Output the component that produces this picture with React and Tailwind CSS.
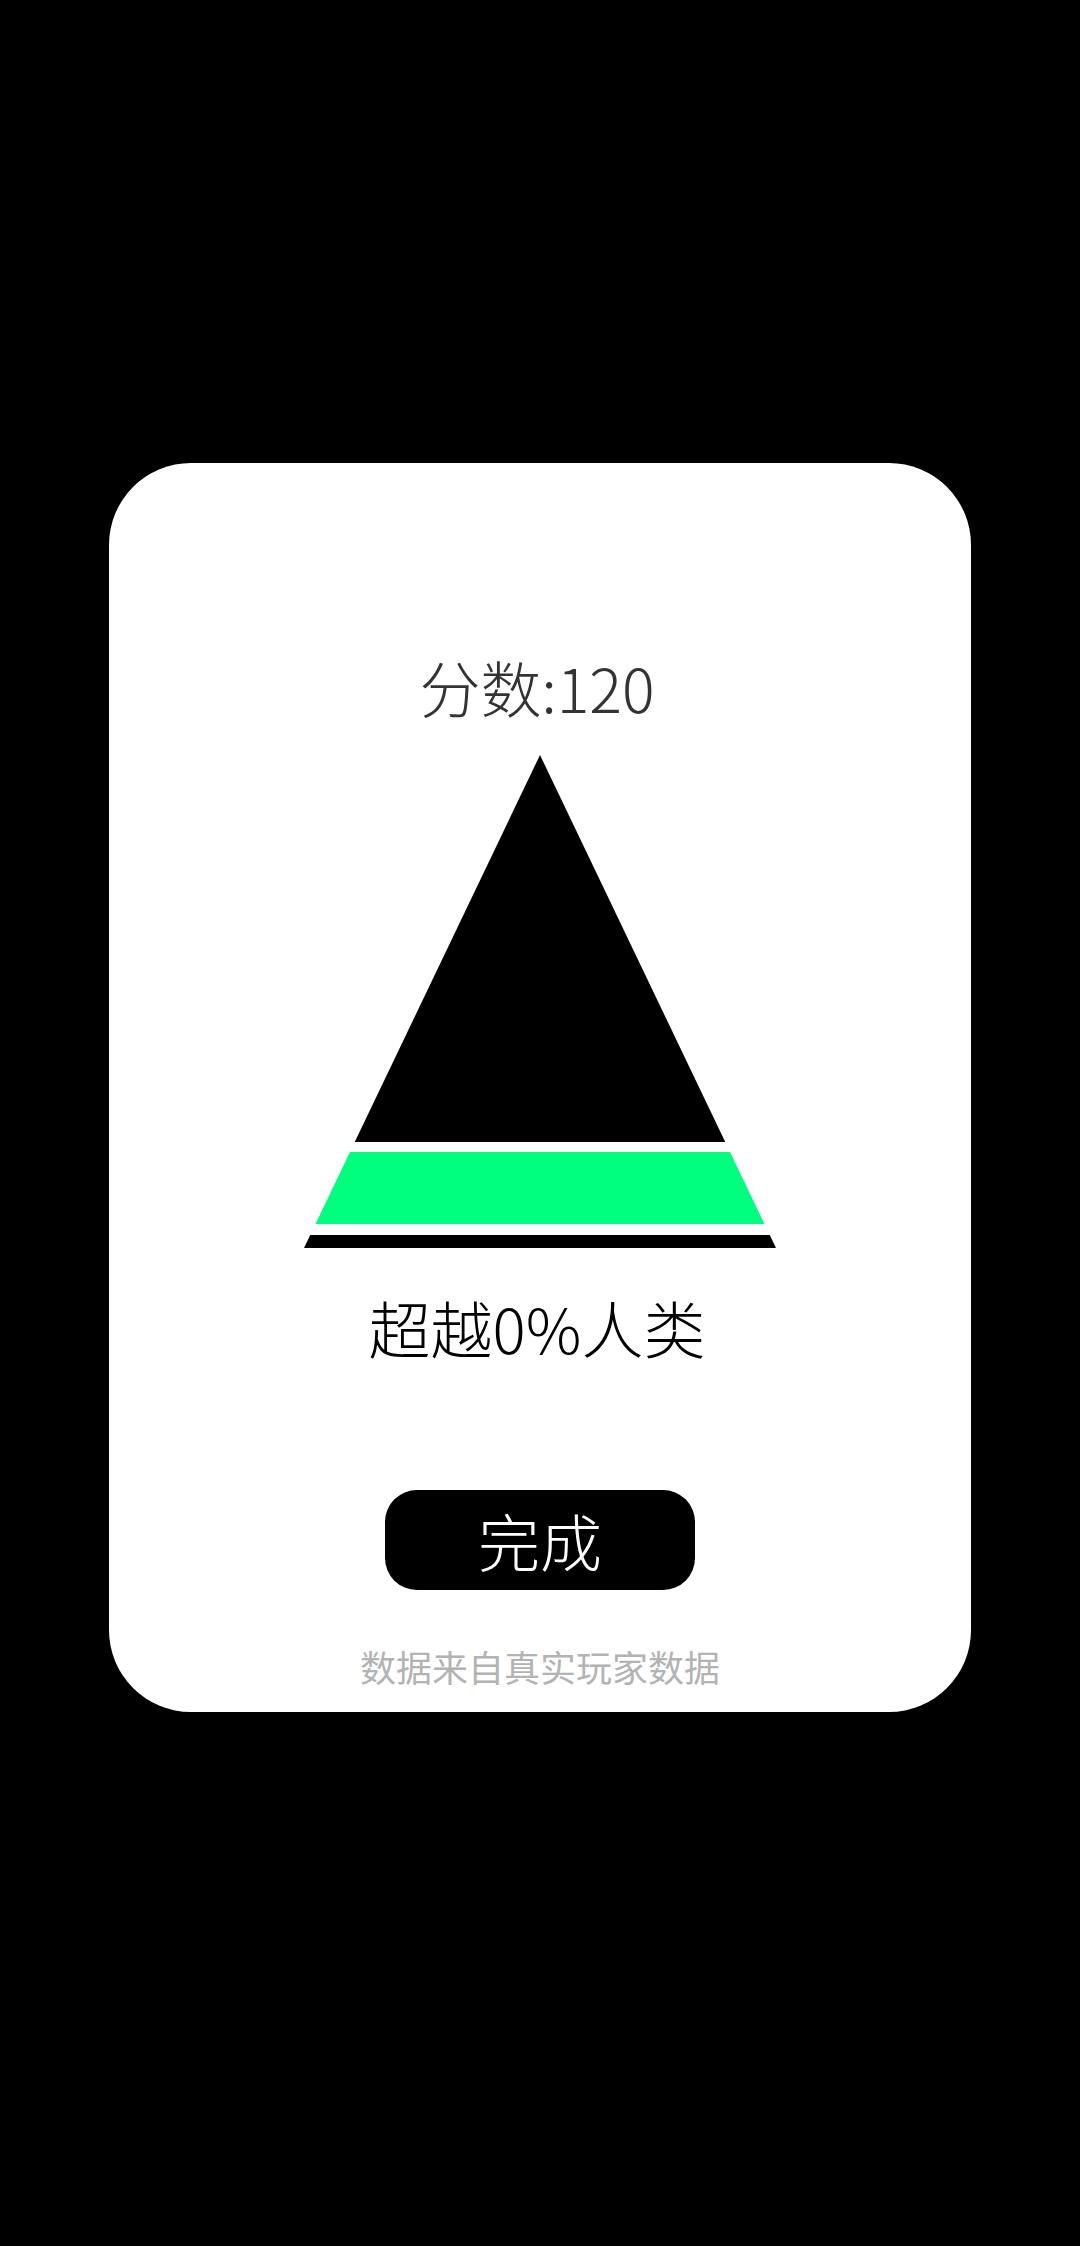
export default function App() {
  const k = 236 / 493;
  const x = (y) => 236 - k * y;
  const r = (y) => 236 + k * y;
  return (
    <div
      className="w-full h-[2246px] bg-black flex flex-col items-center pt-[463px]"
      style={{ fontFamily: '"Noto Sans CJK SC", "Noto Sans", sans-serif' }}
    >
      <div className="w-[862px] h-[1249px] bg-white rounded-[82px] flex flex-col items-center">
        <div className="mt-[184px] h-[80px] leading-[80px] text-[61px] font-light text-[#333333] pr-[6px]">
          分数:120
        </div>
        <svg className="mt-[28px]" width="472" height="493" viewBox="0 0 472 493">
          <polygon points={`236,0 ${x(387)},387 ${r(387)},387`} fill="#000000" />
          <polygon
            points={`${x(397)},397 ${r(397)},397 ${r(469)},469 ${x(469)},469`}
            fill="#00ff7f"
          />
          <polygon
            points={`${x(480)},480 ${r(480)},480 ${r(493)},493 ${x(493)},493`}
            fill="#000000"
          />
        </svg>
        <div className="mt-[39px] h-[80px] leading-[80px] text-[62px] font-light text-black pr-[6px]">
          超越0%人类
        </div>
        <button className="mt-[123px] w-[310px] h-[100px] bg-black rounded-[32px] flex items-center justify-center text-white text-[62px] font-extralight leading-none">
          完成
        </button>
        <div className="mt-[51px] h-[50px] leading-[50px] text-[36px] text-[#b3b3b3]">
          数据来自真实玩家数据
        </div>
      </div>
    </div>
  );
}
